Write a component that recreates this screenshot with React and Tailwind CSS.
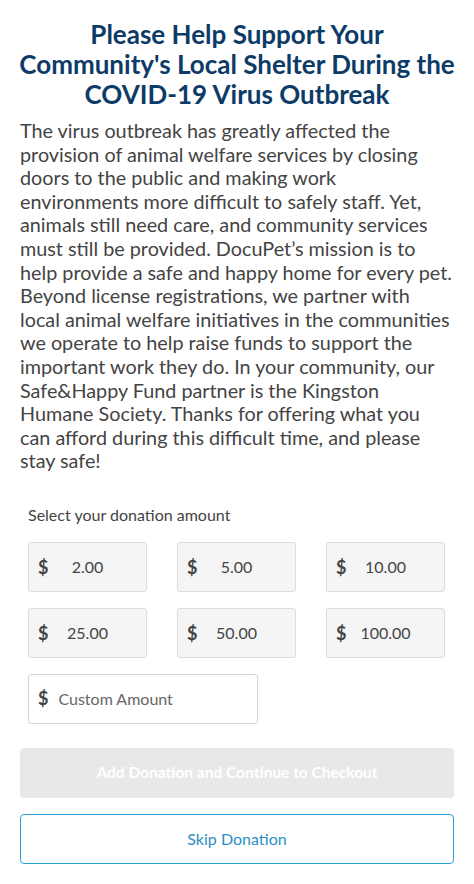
import { useState } from 'react';

const amounts = ['2.00', '5.00', '10.00', '25.00', '50.00', '100.00'];

export default function App() {
  const [selected, setSelected] = useState(null);
  const [custom, setCustom] = useState('');
  const canContinue = selected !== null || custom.trim() !== '';

  return (
    <div className="w-[474px] min-h-[884px] bg-white px-5 pt-[19px] font-['Lato','Liberation_Sans',sans-serif]">
      <h1 className="-mx-3 text-center text-[26px] leading-[30px] font-bold text-[#0d3b68]">
        Please Help Support Your<br />Community's Local Shelter During the<br />COVID-19 Virus Outbreak
      </h1>
      <p className="mt-[10px] text-[19.8px] leading-[23.6px] text-[#444]">
        The virus outbreak has greatly affected the provision of animal welfare services by closing doors to the public and making work environments more difficult to safely staff. Yet, animals still need care, and community services must still be provided. DocuPet’s mission is to help provide a safe and happy home for every pet. Beyond license registrations, we partner with local animal welfare initiatives in the communities we operate to help raise funds to support the important work they do. In your community, our Safe&amp;Happy Fund partner is the Kingston Humane Society. Thanks for offering what you can afford during this difficult time, and please stay safe!
      </p>

      <div className="px-2 mt-[33px]">
        <div className="text-[16px] leading-[18px] text-[#444]">Select your donation amount</div>
        <div className="mt-[18px] grid grid-cols-3 gap-x-[30px] gap-y-4 w-[417px]">
          {amounts.map((a) => (
            <button
              key={a}
              onClick={() => { setSelected(a); setCustom(''); }}
              className={`relative h-[50px] rounded-[3px] border text-[16px] text-[#444] ${selected === a ? 'border-[#2a9fd6] bg-[#eaf6fc]' : 'border-[#dcdcdc] bg-[#f5f5f5]'}`}
            >
              <span className="absolute left-[9px] top-1/2 -translate-y-1/2 text-[18px] font-bold text-[#444]">$</span>
              <span>{a}</span>
            </button>
          ))}
        </div>
        <div className="mt-4 w-[230px] h-[50px] rounded-[3px] border border-[#d4d4d4] bg-white flex items-center px-[9px] gap-[10px]">
          <span className="text-[18px] font-bold text-[#444]">$</span>
          <input
            value={custom}
            onChange={(e) => { setCustom(e.target.value); setSelected(null); }}
            placeholder="Custom Amount"
            className="flex-1 min-w-0 outline-none text-[16px] text-[#444] placeholder:text-[#666] bg-transparent"
          />
        </div>
      </div>

      <button
        disabled={!canContinue}
        className={`mt-[24px] w-full h-[50px] rounded-[4px] text-[15.5px] font-bold text-white ${canContinue ? 'bg-[#2a9fd6]' : 'bg-[#e8e8e8]'}`}
      >
        Add Donation and Continue to Checkout
      </button>
      <button className="mt-4 w-full h-[50px] rounded-[4px] border border-[#2a9fd6] bg-white text-[16px] text-[#2b8fc4]">
        Skip Donation
      </button>
    </div>
  );
}
